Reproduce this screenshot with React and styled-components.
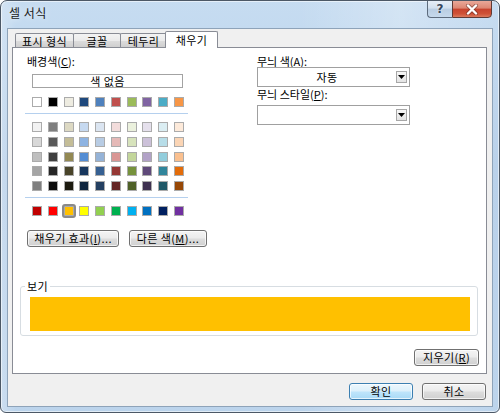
import React from "react";
import styled, { createGlobalStyle, css } from "styled-components";

const Global = createGlobalStyle`
  html, body { margin: 0; padding: 0; background: #ffffff; }
  body { font-family: "Noto Sans CJK KR", "Noto Sans", sans-serif; font-size: 11px; color: #000; }
  * { box-sizing: border-box; }
`;

const Window = styled.div`
  width: 500px;
  height: 413px;
  border: 1px solid #4c5866;
  border-radius: 7px 7px 6px 6px;
  background:
    linear-gradient(90deg, rgba(255,255,255,0.25) 0%, rgba(255,255,255,0) 3%, rgba(255,255,255,0) 60%, rgba(255,255,255,0.25) 80%, rgba(255,255,255,0) 100%),
    linear-gradient(180deg, #c6dcf1 0%, #b9d1ea 40%, #bcd4ec 100%);
  box-shadow: inset 0 0 0 1px rgba(255,255,255,0.55);
  display: flex;
  flex-direction: column;
  overflow: hidden;
`;

const TitleBar = styled.div`
  height: 27px;
  display: flex;
  justify-content: space-between;
  align-items: flex-start;
  flex-shrink: 0;
`;

const Title = styled.div`
  margin: 4px 0 0 8px;
  font-size: 12px;
  line-height: 16px;
  letter-spacing: 0.5px;
  color: #1a1a1a;
  text-shadow: 0 0 6px rgba(255,255,255,0.9);
`;

const Caption = styled.div`
  display: flex;
  margin: -1px 7px 0 0;
`;

const CapBtn = styled.div`
  height: 18px;
  display: flex;
  align-items: center;
  justify-content: center;
  border: 1px solid #5d6c7d;
  ${(p) =>
    p.$close
      ? css`
          width: 40px;
          border-radius: 0 0 4px 0;
          border-color: #5f3a35;
          background: linear-gradient(180deg, #e9a899 0%, #dd8672 45%, #c7432e 50%, #cf5237 80%, #dc7a5c 100%);
        `
      : css`
          width: 25px;
          border-right: none;
          border-radius: 0 0 0 4px;
          background: linear-gradient(180deg, #e6eef7 0%, #d2e0ee 45%, #b9cde2 50%, #c6d9ec 100%);
        `}
`;

const HelpGlyph = styled.span`
  font-family: "DejaVu Sans", sans-serif;
  font-weight: bold;
  font-size: 12px;
  line-height: 12px;
  color: #35475c;
  text-shadow: 0 0 2px #ffffff;
`;

const Client = styled.div`
  flex: 1;
  margin: 0 6px 5px 6px;
  border: 1px solid #8ea3b9;
  background: #f0f0f0;
  padding: 2px 5px 0 4px;
  display: flex;
  flex-direction: column;
`;

const TabStrip = styled.div`
  height: 16px;
  display: flex;
  align-items: flex-end;
  padding-left: 3px;
`;

const Tab = styled.div`
  width: ${(p) => p.$w}px;
  flex-shrink: 0;
  height: ${(p) => (p.$active ? 17 : 14)}px;
  margin-left: ${(p) => p.$ml || 0}px;
  margin-bottom: ${(p) => (p.$active ? -1 : 0)}px;
  border: 1px solid #898c95;
  border-bottom: none;
  border-radius: 2px 2px 0 0;
  display: flex;
  align-items: center;
  justify-content: center;
  font-size: 11px;
  line-height: 12px;
  letter-spacing: 0.4px;
  position: relative;
  z-index: ${(p) => (p.$active ? 2 : 0)};
  background: ${(p) =>
    p.$active ? "#ffffff" : "linear-gradient(180deg, #f3f3f3 0%, #ebebeb 50%, #dddddd 51%, #cfcfcf 100%)"};
  padding-top: ${(p) => (p.$active ? 0 : 1)}px;
`;

const Panel = styled.div`
  width: 475px;
  height: 327px;
  border: 1px solid #898c95;
  background: #ffffff;
  display: flex;
  flex-direction: column;
  position: relative;
  z-index: 1;
`;

const TopSection = styled.div`
  display: flex;
  padding: 6px 0 0 14px;
`;

const LeftCol = styled.div`
  width: 162px;
  flex-shrink: 0;
  display: flex;
  flex-direction: column;
`;

const RightCol = styled.div`
  width: 153px;
  flex-shrink: 0;
  margin-left: 68px;
  display: flex;
  flex-direction: column;
`;

const Label = styled.div`
  height: 14px;
  line-height: 14px;
  font-size: 11px;
  white-space: nowrap;
`;

const NoColor = styled.div`
  margin: 6px 0 0 5px;
  width: 151px;
  height: 14px;
  border: 1px solid #a3a3a3;
  text-align: center;
  line-height: 12px;
  font-size: 11px;
  letter-spacing: 0.4px;
`;

const SwatchRow = styled.div`
  margin: ${(p) => p.$mt}px 0 0 5px;
  width: 152px;
  display: flex;
  justify-content: space-between;
`;

const SwatchGrid = styled.div`
  margin: 8px 0 0 5px;
  width: 152px;
  display: grid;
  grid-template-columns: repeat(10, 10px);
  justify-content: space-between;
  row-gap: 4.75px;
`;

const Swatch = styled.div`
  width: 10px;
  height: 10px;
  flex-shrink: 0;
  border: 1px solid #ababab;
  background: ${(p) => p.$c};
  position: relative;
  ${(p) =>
    p.$selected &&
    css`
      &::after {
        content: "";
        position: absolute;
        left: -3px;
        top: -3px;
        right: -3px;
        bottom: -3px;
        border: 2px solid #8a8a8a;
        border-radius: 3px;
      }
    `}
`;

const Separator = styled.div`
  margin: 6px 0 0 -2px;
  width: 163px;
  height: 1px;
  background: #b5d0ee;
`;

const BtnRow = styled.div`
  margin-top: 14px;
  display: flex;
  gap: 10px;
`;

const Button = styled.div`
  width: ${(p) => p.$w}px;
  flex-shrink: 0;
  height: 17px;
  border: 1px solid ${(p) => (p.$default ? "#3c7fb1" : "#707070")};
  border-radius: 3px;
  background: ${(p) =>
    p.$default
      ? "linear-gradient(180deg, #ecf7fd 0%, #dcf0fb 48%, #bfe5fb 52%, #a9daf6 100%)"
      : "linear-gradient(180deg, #f4f4f4 0%, #ebebeb 48%, #dddddd 52%, #d0d0d0 100%)"};
  box-shadow: inset 0 0 0 1px rgba(255,255,255,0.7);
  display: flex;
  align-items: center;
  justify-content: center;
  font-size: 11px;
  line-height: 13px;
  letter-spacing: 0.4px;
  white-space: nowrap;
  align-self: ${(p) => (p.$end ? "flex-end" : "auto")};
  margin-right: ${(p) => p.$mr || 0}px;
  margin-top: ${(p) => p.$mt || 0}px;
`;

const Select = styled.div`
  margin-top: ${(p) => p.$mt}px;
  width: 153px;
  height: 20px;
  border: 1px solid #a0a0a0;
  background: #ffffff;
  display: flex;
  align-items: center;
`;

const SelectText = styled.div`
  flex: 1;
  text-align: center;
  font-size: 11px;
  line-height: 14px;
  letter-spacing: 0.4px;
`;

const DropBtn = styled.div`
  width: 11px;
  height: 12px;
  margin-right: 2px;
  border: 1px solid #a7a7a7;
  background: linear-gradient(180deg, #f7f7f7 0%, #e4e4e4 100%);
  display: flex;
  align-items: center;
  justify-content: center;
`;

const Group = styled.fieldset`
  margin: 32px 8px 0 7px;
  padding: 4px 7px 4px 9px;
  border: 1px solid #d7dde2;
  border-radius: 3px;
  min-width: 0;
`;

const Legend = styled.legend`
  margin-left: -5px;
  padding: 0 2px;
  font-size: 11px;
  line-height: 14px;
  letter-spacing: 0.4px;
`;

const Preview = styled.div`
  height: 34px;
  background: ${(p) => p.$c};
`;

const ButtonBar = styled.div`
  margin-top: 9px;
  display: flex;
  justify-content: flex-end;
  gap: 9px;
  padding-right: 1px;
`;

const theme = ["#FFFFFF", "#000000", "#EEECE1", "#1F497D", "#4F81BD", "#C0504D", "#9BBB59", "#8064A2", "#4BACC6", "#F79646"];
const tints = [
  ["#F2F2F2", "#7F7F7F", "#DDD9C3", "#C6D9F0", "#DBE5F1", "#F2DCDB", "#EBF1DD", "#E5E0EC", "#DBEEF3", "#FDEADA"],
  ["#D8D8D8", "#595959", "#C4BD97", "#8DB3E2", "#B8CCE4", "#E5B9B7", "#D7E3BC", "#CCC1D9", "#B7DDE8", "#FBD5B5"],
  ["#BFBFBF", "#3F3F3F", "#938953", "#548DD4", "#95B3D7", "#D99694", "#C3D69B", "#B2A2C7", "#92CDDC", "#FAC08F"],
  ["#A5A5A5", "#262626", "#494429", "#17365D", "#366092", "#953734", "#76923C", "#5F497A", "#31859B", "#E36C09"],
  ["#7F7F7F", "#0C0C0C", "#1D1B10", "#0F243E", "#244061", "#632423", "#4F6128", "#3F3151", "#205867", "#974806"],
];
const standard = ["#C00000", "#FF0000", "#FFC000", "#FFFF00", "#92D050", "#00B050", "#00B0F0", "#0070C0", "#002060", "#7030A0"];

const Arrow = () => (
  <svg width="7" height="4" viewBox="0 0 7 4">
    <path d="M0 0 H7 L3.5 4 Z" fill="#000" />
  </svg>
);

const CloseX = () => (
  <svg width="14" height="11" viewBox="0 0 14 11">
    <path d="M3 1.5 L11 9.5 M11 1.5 L3 9.5" stroke="#5a2a22" strokeWidth="4" strokeLinecap="round" opacity="0.5" />
    <path d="M3 1.5 L11 9.5 M11 1.5 L3 9.5" stroke="#ffffff" strokeWidth="2.4" strokeLinecap="round" />
  </svg>
);

export default function App() {
  return (
    <>
      <Global />
      <Window>
        <TitleBar>
          <Title>셀 서식</Title>
          <Caption>
            <CapBtn>
              <HelpGlyph>?</HelpGlyph>
            </CapBtn>
            <CapBtn $close>
              <CloseX />
            </CapBtn>
          </Caption>
        </TitleBar>
        <Client>
          <TabStrip>
            <Tab $w={59}>표시 형식</Tab>
            <Tab $w={48} $ml={-1}>글꼴</Tab>
            <Tab $w={47} $ml={-1}>테두리</Tab>
            <Tab $w={53} $ml={-2} $active>채우기</Tab>
          </TabStrip>
          <Panel>
            <TopSection>
              <LeftCol>
                <Label>
                  배경색(<u>C</u>):
                </Label>
                <NoColor>색 없음</NoColor>
                <SwatchRow $mt={9}>
                  {theme.map((c, i) => (
                    <Swatch key={i} $c={c} />
                  ))}
                </SwatchRow>
                <Separator />
                <SwatchGrid>
                  {tints.flat().map((c, i) => (
                    <Swatch key={i} $c={c} />
                  ))}
                </SwatchGrid>
                <Separator />
                <SwatchRow $mt={8}>
                  {standard.map((c, i) => (
                    <Swatch key={i} $c={c} $selected={i === 2} />
                  ))}
                </SwatchRow>
                <BtnRow>
                  <Button $w={92}>
                    채우기 효과(<u>I</u>)...
                  </Button>
                  <Button $w={78}>
                    다른 색(<u>M</u>)...
                  </Button>
                </BtnRow>
              </LeftCol>
              <RightCol>
                <Label>
                  무늬 색(<u>A</u>):
                </Label>
                <Select $mt={-1}>
                  <SelectText>자동</SelectText>
                  <DropBtn>
                    <Arrow />
                  </DropBtn>
                </Select>
                <Label>
                  무늬 스타일(<u>P</u>):
                </Label>
                <Select $mt={4}>
                  <SelectText />
                  <DropBtn>
                    <Arrow />
                  </DropBtn>
                </Select>
              </RightCol>
            </TopSection>
            <Group>
              <Legend>보기</Legend>
              <Preview $c="#FFC000" />
            </Group>
            <Button $w={65} $end $mr={7} $mt={13}>
              지우기(<u>R</u>)
            </Button>
          </Panel>
          <ButtonBar>
            <Button $w={64} $default>확인</Button>
            <Button $w={64}>취소</Button>
          </ButtonBar>
        </Client>
      </Window>
    </>
  );
}
